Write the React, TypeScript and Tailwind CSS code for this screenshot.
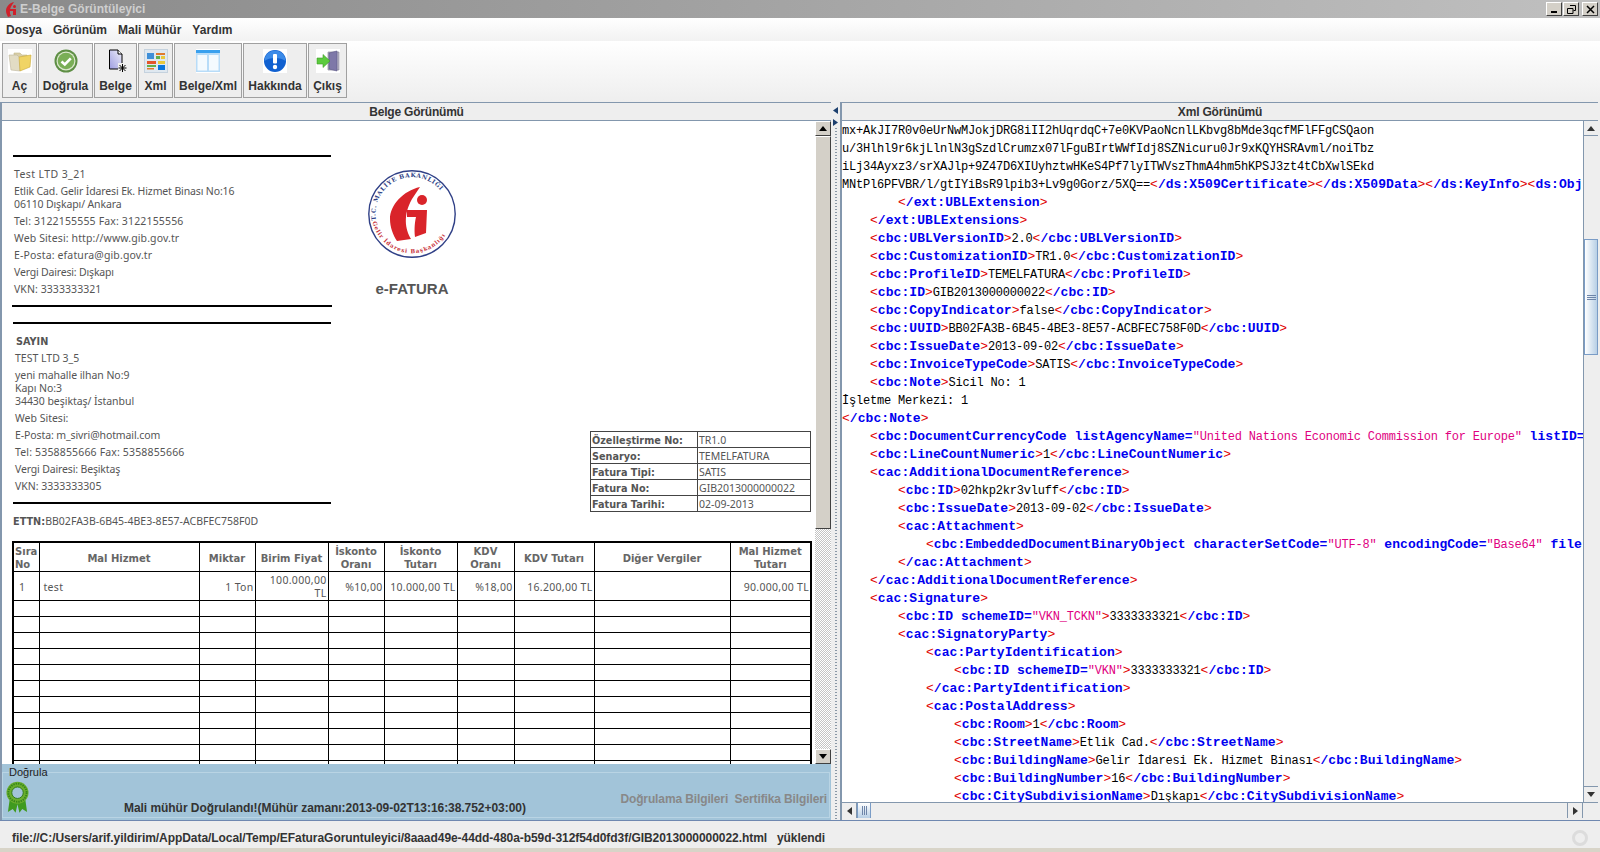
import type { ReactNode } from "react";

const XML_LINES: [number, string][] = [
  [0, "mx+AkJI7R0v0eUrNwMJokjDRG8iII2hUqrdqC+7e0KVPaoNcnlLKbvg8bMde3qcfMFlFFgCSQaon"],
  [0, "u/3Hlhl9r6kjLlnlN3gSzdlCrumzx07lFguBIrtWWfIdj8SZNicuru0Jr9xKQYHSRAvml/noiTbz"],
  [0, "iLj34Ayxz3/srXAJlp+9Z47D6XIUyhztwHKeS4Pf7lyITWVszThmA4hm5hKPSJ3zt4tCbXwlSEkd"],
  [0, "MNtPl6PFVBR/l/gtIYiBsR9lpib3+Lv9g0Gorz/5XQ==</ds:X509Certificate></ds:X509Data></ds:KeyInfo><ds:Obj"],
  [2, "</ext:UBLExtension>"],
  [1, "</ext:UBLExtensions>"],
  [1, "<cbc:UBLVersionID>2.0</cbc:UBLVersionID>"],
  [1, "<cbc:CustomizationID>TR1.0</cbc:CustomizationID>"],
  [1, "<cbc:ProfileID>TEMELFATURA</cbc:ProfileID>"],
  [1, "<cbc:ID>GIB2013000000022</cbc:ID>"],
  [1, "<cbc:CopyIndicator>false</cbc:CopyIndicator>"],
  [1, "<cbc:UUID>BB02FA3B-6B45-4BE3-8E57-ACBFEC758F0D</cbc:UUID>"],
  [1, "<cbc:IssueDate>2013-09-02</cbc:IssueDate>"],
  [1, "<cbc:InvoiceTypeCode>SATIS</cbc:InvoiceTypeCode>"],
  [1, "<cbc:Note>Sicil No: 1"],
  [0, "İşletme Merkezi: 1"],
  [0, "</cbc:Note>"],
  [1, '<cbc:DocumentCurrencyCode listAgencyName="United Nations Economic Commission for Europe" listID='],
  [1, "<cbc:LineCountNumeric>1</cbc:LineCountNumeric>"],
  [1, "<cac:AdditionalDocumentReference>"],
  [2, "<cbc:ID>02hkp2kr3vluff</cbc:ID>"],
  [2, "<cbc:IssueDate>2013-09-02</cbc:IssueDate>"],
  [2, "<cac:Attachment>"],
  [3, '<cbc:EmbeddedDocumentBinaryObject characterSetCode="UTF-8" encodingCode="Base64" file'],
  [2, "</cac:Attachment>"],
  [1, "</cac:AdditionalDocumentReference>"],
  [1, "<cac:Signature>"],
  [2, '<cbc:ID schemeID="VKN_TCKN">3333333321</cbc:ID>'],
  [2, "<cac:SignatoryParty>"],
  [3, "<cac:PartyIdentification>"],
  [4, '<cbc:ID schemeID="VKN">3333333321</cbc:ID>'],
  [3, "</cac:PartyIdentification>"],
  [3, "<cac:PostalAddress>"],
  [4, "<cbc:Room>1</cbc:Room>"],
  [4, "<cbc:StreetName>Etlik Cad.</cbc:StreetName>"],
  [4, "<cbc:BuildingName>Gelir İdaresi Ek. Hizmet Binası</cbc:BuildingName>"],
  [4, "<cbc:BuildingNumber>16</cbc:BuildingNumber>"],
  [4, "<cbc:CitySubdivisionName>Dışkapı</cbc:CitySubdivisionName>"],
];

const INDENT = ["pl-0", "pl-[28px]", "pl-[56px]", "pl-[84px]", "pl-[112px]"];
const PLAIN = "text-[12px] tracking-[-0.2px]";

function XmlTag({ tag }: { tag: string }) {
  const closed = tag.endsWith(">");
  const inner = tag.slice(1, closed ? -1 : undefined);
  return (
    <>
      <span className="text-[#e00000]">&lt;</span>
      {inner.split(/("[^"]*")/).map((part, i) =>
        part.startsWith('"') ? (
          <span key={i} className={`${PLAIN} text-[#e0007f]`}>{part}</span>
        ) : (
          <span key={i} className="font-bold tracking-[0.07px] text-[#0000f0]">{part}</span>
        ),
      )}
      {closed && <span className="text-[#e00000]">&gt;</span>}
    </>
  );
}

function XmlLine({ text }: { text: string }) {
  return (
    <>
      {text.split(/(<[^>]*>?)/).map((part, i) =>
        part.startsWith("<") ? <XmlTag key={i} tag={part} /> : <span key={i} className={PLAIN}>{part}</span>,
      )}
    </>
  );
}

function LogoMark() {
  return (
    <svg viewBox="0 0 90 90" className="h-[90px] w-[90px]">
      <circle cx="45" cy="45" r="43.2" fill="#fff" stroke="#2f3f86" strokeWidth="1.4" />
      <path d="M53 18C36 22 23 36 23 50C23 58 26 66 30 72L44 70C38 60 36 46 45 30Z" fill="#d9242a" />
      <circle cx="55" cy="31" r="5" fill="#d9242a" />
      <path d="M40 41H60L59 64L48 68C47 60 48 52 49 48H40Z" fill="#d9242a" />
      <defs>
        <path id="logoTop" d="M10 55A36.5 36.5 0 1 1 80 55" />
        <path id="logoBottom" d="M5 50A40.5 40.5 0 0 0 85 50" />
      </defs>
      <text className="font-['DejaVu_Serif',serif] text-[6px] font-bold tracking-[0.6px]" fill="#2f3f86">
        <textPath href="#logoTop" startOffset="4">T.C. MALİYE BAKANLIĞI</textPath>
      </text>
      <text className="font-['DejaVu_Serif',serif] text-[5.6px] font-bold tracking-[0.8px]" fill="#c8323a">
        <textPath href="#logoBottom" startOffset="3">Gelir İdaresi Başkanlığı</textPath>
      </text>
    </svg>
  );
}

function TitleIcon() {
  return (
    <svg viewBox="0 0 12 15" className="ml-[5px] h-[15px] w-[12px]">
      <path d="M9 0C4 1 1 5 1 9C1 11 2 13 3 15L6 14C4 10 5 6 7 3Z" fill="#d0202a" />
      <circle cx="9.5" cy="4.5" r="1.5" fill="#d0202a" />
      <path d="M5 7H11V13H8V9H5Z" fill="#d0202a" />
    </svg>
  );
}

function WindowButton({ children }: { children: ReactNode }) {
  return (
    <div className="flex h-[14px] w-[16px] items-center justify-center border border-t-white border-l-white border-r-[#404040] border-b-[#404040] bg-[#d4d0c8]">
      {children}
    </div>
  );
}

function FolderIcon() {
  return (
    <svg viewBox="0 0 24 24" className="h-6 w-6 bg-white">
      <path d="M6 4H12L14 6H19V18H6Z" fill="#d9cfa8" stroke="#c4b98c" strokeWidth=".6" />
      <path d="M1 6H9L12 9V22L3 21Z" fill="#e2dcc4" stroke="#bdb69c" strokeWidth=".6" />
      <path d="M11 8L23 6L22 18L12 22Z" fill="#f0d465" stroke="#c9a93a" strokeWidth=".6" />
    </svg>
  );
}

function CheckIcon() {
  return (
    <svg viewBox="0 0 24 24" className="h-6 w-6">
      <circle cx="12" cy="12" r="11.5" fill="#5e8f45" />
      <circle cx="12" cy="12" r="9.5" fill="#dbe8cd" />
      <circle cx="12" cy="12" r="8.3" fill="#79ae56" />
      <path d="M7.5 12.5L10.8 15.5L16.8 9.3" fill="none" stroke="#fff" strokeWidth="2.6" />
    </svg>
  );
}

function DocumentIcon() {
  return (
    <svg viewBox="0 0 24 24" className="h-6 w-6">
      <defs>
        <linearGradient id="docFill" x1="0" y1="1" x2="1" y2="0">
          <stop offset="0" stopColor="#9d9de0" />
          <stop offset="1" stopColor="#f0f0fa" />
        </linearGradient>
      </defs>
      <path d="M5.5 1H14L18 5V20H5.5Z" fill="url(#docFill)" stroke="#000" />
      <path d="M14 1V5H18" fill="#fff" stroke="#000" />
      <rect x="14" y="14" width="9" height="9" fill="#eeeeee" />
      <path d="M18.5 15V23M14.5 19H22.5M15.5 16L21.5 22M21.5 16L15.5 22" stroke="#000" strokeWidth="1" />
    </svg>
  );
}

function XmlIcon() {
  return (
    <svg viewBox="0 0 24 24" className="h-6 w-6">
      <rect x=".5" y=".5" width="23" height="23" fill="#dfe8f0" stroke="#c5d2de" />
      <rect x="3" y="4" width="7" height="6" fill="#3f8fd8" />
      <rect x="12" y="4" width="9" height="2" fill="#e07a2c" />
      <rect x="12" y="7" width="4" height="3" fill="#63b04a" />
      <rect x="17" y="7" width="4" height="3" fill="#e8c83c" />
      <rect x="3" y="12" width="9" height="3" fill="#e4552a" />
      <rect x="3" y="16" width="9" height="2" fill="#63b04a" />
      <rect x="3" y="19" width="7" height="1.5" fill="#e07a2c" />
      <rect x="14" y="12" width="7" height="3" fill="#e8c83c" />
      <rect x="14" y="16" width="7" height="5" fill="#0a76dc" />
    </svg>
  );
}

function SplitIcon() {
  return (
    <svg viewBox="0 0 24 24" className="h-6 w-6 bg-white">
      <rect x="0" y="1" width="24" height="22" fill="#b8dcf8" />
      <rect x="0" y="1" width="24" height="3" fill="#39a0ee" />
      <rect x="1.5" y="6" width="9.5" height="15.5" fill="#f4fafe" />
      <rect x="13" y="6" width="9.5" height="15.5" fill="#f4fafe" />
    </svg>
  );
}

function InfoIcon() {
  return (
    <svg viewBox="0 0 24 24" className="h-6 w-6 bg-white">
      <circle cx="12" cy="12" r="11" fill="#1060d0" />
      <path d="M1.5 12A10.5 10.5 0 0 1 22.5 12C18 8 6 8 1.5 12Z" fill="#3b8ae8" />
      <rect x="10" y="5" width="4" height="9.5" rx="1" fill="#fff" />
      <circle cx="12" cy="18" r="2.2" fill="#fff" />
    </svg>
  );
}

function ExitIcon() {
  return (
    <svg viewBox="0 0 24 24" className="h-6 w-6 bg-white">
      <path d="M12 3H23V21H12Z" fill="#b9b7c8" stroke="#7c7a8e" strokeWidth=".6" />
      <path d="M13 4L21 2V22L13 20Z" fill="#7e78a8" stroke="#5d5788" strokeWidth=".6" />
      <path d="M1 9H7V5.5L14 12L7 18.5V15H1Z" fill="#5ccb3e" stroke="#3f9a2a" strokeWidth=".6" />
    </svg>
  );
}

function Rosette() {
  return (
    <svg viewBox="0 0 24 34" className="h-[33px] w-[23px] shrink-0">
      <path d="M4 18L2 32L7 29L10 33L12 24L14 33L17 29L22 32L20 18Z" fill="#3f9a1f" />
      <circle cx="12" cy="12" r="11.5" fill="#6aae2e" />
      <circle cx="12" cy="12" r="9.5" fill="none" stroke="#35861a" strokeWidth="2" strokeDasharray="1.5 1" />
      <circle cx="12" cy="12" r="6" fill="#a3c4d9" stroke="#2e7a18" />
    </svg>
  );
}

const TOOLBAR = [
  { label: "Aç", width: "w-[35px]", icon: <FolderIcon /> },
  { label: "Doğrula", width: "w-[55px]", icon: <CheckIcon /> },
  { label: "Belge", width: "w-[43px]", icon: <DocumentIcon /> },
  { label: "Xml", width: "w-[35px]", icon: <XmlIcon /> },
  { label: "Belge/Xml", width: "w-[68px]", icon: <SplitIcon /> },
  { label: "Hakkında", width: "w-[64px]", icon: <InfoIcon /> },
  { label: "Çıkış", width: "w-[39px]", icon: <ExitIcon /> },
];

const PARTY_TEXT = "mt-[4px] leading-[13px]";
const BOLD_TEXT = "font-['DejaVu_Sans',sans-serif] font-bold";

function SellerBlock() {
  return (
    <div className="pl-[2px] pt-[7px]">
      <p className={`${PARTY_TEXT} tracking-[0.4px]`}>Test LTD 3_21</p>
      <p className={`${PARTY_TEXT} tracking-[-0.13px]`}>
        Etlik Cad. Gelir İdaresi Ek. Hizmet Binası No:16
        <br />
        06110 Dışkapı/ Ankara
      </p>
      <p className={`${PARTY_TEXT} tracking-[0.16px]`}>Tel: 3122155555 Fax: 3122155556</p>
      <p className={`${PARTY_TEXT} tracking-[0.12px]`}>Web Sitesi: http://www.gib.gov.tr</p>
      <p className={`${PARTY_TEXT} tracking-[0.15px]`}>E-Posta: efatura@gib.gov.tr</p>
      <p className={`${PARTY_TEXT} tracking-[-0.18px]`}>Vergi Dairesi: Dışkapı</p>
      <p className={`${PARTY_TEXT} tracking-[0.07px]`}>VKN: 3333333321</p>
    </div>
  );
}

function BuyerBlock() {
  return (
    <div className="pl-[3px] pt-[7px]">
      <p className={`${PARTY_TEXT} ${BOLD_TEXT} pl-px text-[9.7px]`}>SAYIN</p>
      <p className={PARTY_TEXT}>TEST LTD 3_5</p>
      <p className={`${PARTY_TEXT} tracking-[-0.05px]`}>
        yeni mahalle ilhan No:9
        <br />
        Kapı No:3
        <br />
        34430 beşiktaş/ İstanbul
      </p>
      <p className={PARTY_TEXT}>Web Sitesi:</p>
      <p className={`${PARTY_TEXT} tracking-[-0.1px]`}>E-Posta: m_sivri@hotmail.com</p>
      <p className={`${PARTY_TEXT} tracking-[0.16px]`}>Tel: 5358855666 Fax: 5358855666</p>
      <p className={`${PARTY_TEXT} tracking-[-0.15px]`}>Vergi Dairesi: Beşiktaş</p>
      <p className={PARTY_TEXT}>VKN: 3333333305</p>
    </div>
  );
}

const INFO_ROWS = [
  ["Özelleştirme No:", "TR1.0"],
  ["Senaryo:", "TEMELFATURA"],
  ["Fatura Tipi:", "SATIS"],
  ["Fatura No:", "GIB2013000000022"],
  ["Fatura Tarihi:", "02-09-2013"],
];

function InfoTable() {
  return (
    <table className="mb-[16px] w-[221px] table-fixed self-end border-collapse">
      <colgroup>
        <col className="w-[107px]" />
        <col />
      </colgroup>
      <tbody>
        {INFO_ROWS.map(([label, value]) => (
          <tr key={label} className="h-[16px]">
            <td className={`${BOLD_TEXT} whitespace-nowrap border border-[#444] px-[1px] pb-0 pt-[1px] text-[9.7px] leading-[13px]`}>{label}</td>
            <td className="border border-[#444] px-[1px] py-0 leading-[14px]">{value}</td>
          </tr>
        ))}
      </tbody>
    </table>
  );
}

const HEAD_CELL = `${BOLD_TEXT} whitespace-pre-line border border-black px-[1px] pb-0 pt-[2px] align-middle text-[10px] leading-[13px] text-[#666]`;
const BODY_CELL = "whitespace-pre-line border border-black px-[1px] pb-0 pt-[2px] align-middle leading-[13px] tracking-[0.3px]";

const HEADERS = [
  "Sıra\nNo",
  "Mal Hizmet",
  "Miktar",
  "Birim Fiyat",
  "İskonto\nOranı",
  "İskonto\nTutarı",
  "KDV\nOranı",
  "KDV Tutarı",
  "Diğer Vergiler",
  "Mal Hizmet\nTutarı",
];

function ItemTable() {
  return (
    <table className="mt-[13px] w-[798px] table-fixed border-collapse border-2 border-black">
      <colgroup>
        <col className="w-[26px]" />
        <col className="w-[160px]" />
        <col className="w-[56px]" />
        <col className="w-[73px]" />
        <col className="w-[56px]" />
        <col className="w-[73px]" />
        <col className="w-[57px]" />
        <col className="w-[80px]" />
        <col className="w-[136px]" />
        <col className="w-[81px]" />
      </colgroup>
      <thead>
        <tr className="h-[29px]">
          {HEADERS.map((h, i) => (
            <th key={h} className={`${HEAD_CELL} ${i === 0 ? "text-left" : "text-center"}`}>
              {h}
            </th>
          ))}
        </tr>
      </thead>
      <tbody>
        <tr className="h-[29px]">
          <td className={`${BODY_CELL} pl-[5px] text-left`}>1</td>
          <td className={`${BODY_CELL} pl-[4px] text-left`}>test</td>
          <td className={`${BODY_CELL} text-right`}>1 Ton</td>
          <td className={`${BODY_CELL} text-right`}>{"100.000,00\nTL"}</td>
          <td className={`${BODY_CELL} text-right`}>%10,00</td>
          <td className={`${BODY_CELL} text-right`}>10.000,00 TL</td>
          <td className={`${BODY_CELL} text-right`}>%18,00</td>
          <td className={`${BODY_CELL} text-right`}>16.200,00 TL</td>
          <td className={BODY_CELL}></td>
          <td className={`${BODY_CELL} text-right`}>90.000,00 TL</td>
        </tr>
        {Array.from({ length: 11 }).map((_, row) => (
          <tr key={row} className="h-[16px]">
            {HEADERS.map((h) => (
              <td key={h} className="border border-black p-0" />
            ))}
          </tr>
        ))}
      </tbody>
    </table>
  );
}

function DocumentView() {
  return (
    <div className="min-w-0 flex-1 overflow-hidden bg-white pl-[10px] pt-[34px] font-['Noto_Sans',sans-serif] text-[10.5px] text-[#555]">
      <div className="flex w-[799px]">
        <div className="w-[320px]">
          <div className="mx-[1px] h-[2px] bg-black" />
          <SellerBlock />
          <div className="mt-[9px] h-[2px] bg-black" />
          <div className="mx-[1px] mt-[15px] h-[2px] bg-black" />
          <BuyerBlock />
          <div className="mx-[1px] mt-[9px] h-[2px] bg-black" />
          <p className="mt-[11px] pl-[1px] leading-[13px] tracking-[0.02px]">
            <b className={`${BOLD_TEXT} text-[9.7px]`}>ETTN:</b>BB02FA3B-6B45-4BE3-8E57-ACBFEC758F0D
          </p>
        </div>
        <div className="ml-[35px] mt-[14px] flex w-[90px] flex-col items-center">
          <LogoMark />
          <p className="mt-[22px] whitespace-nowrap font-['Liberation_Sans',sans-serif] text-[15px] font-bold leading-[16px]">e-FATURA</p>
        </div>
        <div className="ml-auto flex">
          <InfoTable />
        </div>
      </div>
      <ItemTable />
    </div>
  );
}

function LeftScrollbar() {
  return (
    <div className="flex h-full w-[16px] shrink-0 flex-col">
      <div className="flex h-[15px] shrink-0 items-center justify-center border border-t-white border-l-white border-r-[#404040] border-b-[#404040] bg-[#d4d0c8]">
        <svg viewBox="0 0 8 5" className="h-[5px] w-[8px]"><path d="M4 0L8 5H0Z" fill="#000" /></svg>
      </div>
      <div className="h-[393px] shrink-0 border border-t-white border-l-white border-r-[#404040] border-b-[#404040] bg-[#d4d0c8]" />
      <div className="flex-1 bg-[repeating-conic-gradient(#c4c4c4_0_25%,#ffffff_0_50%)] bg-[length:2px_2px]" />
      <div className="flex h-[15px] shrink-0 items-center justify-center border border-t-white border-l-white border-r-[#404040] border-b-[#404040] bg-[#d4d0c8]">
        <svg viewBox="0 0 8 5" className="h-[5px] w-[8px]"><path d="M0 0H8L4 5Z" fill="#000" /></svg>
      </div>
    </div>
  );
}

function PanelHeader({ title }: { title: string }) {
  return (
    <div className="flex h-[19px] shrink-0 items-center justify-center border-y border-[#8397ad] bg-[#eeeeee] text-[12px] font-bold tracking-[-0.2px] text-[#333]">
      {title}
    </div>
  );
}

function Splitter() {
  return (
    <div className="flex w-[9px] shrink-0 flex-col items-center bg-[#eeeeee] pt-[5px]">
      <svg viewBox="0 0 5 7" className="h-[7px] w-[5px]"><path d="M5 0V7L0 3.5Z" fill="#1c3f6e" /></svg>
      <svg viewBox="0 0 5 7" className="mt-[5px] h-[7px] w-[5px]"><path d="M0 0V7L5 3.5Z" fill="#1c3f6e" /></svg>
      <div className="mt-[2px] w-[2px] flex-1 bg-[repeating-linear-gradient(to_bottom,#8a98a6_0,#8a98a6_1px,transparent_1px,transparent_3px)]" />
    </div>
  );
}

function XmlScrollbar() {
  return (
    <div className="flex w-[15px] shrink-0 flex-col border-l border-[#8397ad] bg-[#eeeeee]">
      <div className="flex h-[15px] shrink-0 items-center justify-center border-b border-[#8397ad]">
        <svg viewBox="0 0 8 5" className="h-[5px] w-[8px]"><path d="M4 0L8 5H0Z" fill="#333" /></svg>
      </div>
      <div className="h-[103px] shrink-0" />
      <div className="flex h-[116px] shrink-0 flex-col items-center justify-center gap-[1px] border border-[#7a9cc6] bg-gradient-to-r from-white to-[#b8cfe5]">
        <div className="h-px w-[9px] bg-[#6d84a8]" />
        <div className="h-px w-[9px] bg-[#6d84a8]" />
        <div className="h-px w-[9px] bg-[#6d84a8]" />
      </div>
      <div className="flex-1" />
      <div className="flex h-[16px] shrink-0 items-center justify-center border-t border-[#8397ad]">
        <svg viewBox="0 0 8 5" className="h-[5px] w-[8px]"><path d="M0 0H8L4 5Z" fill="#333" /></svg>
      </div>
    </div>
  );
}

function XmlHorizontalBar() {
  return (
    <div className="flex h-[15px] shrink-0 bg-[#eeeeee]">
      <div className="flex w-[15px] items-center justify-center border-r border-[#8397ad]">
        <svg viewBox="0 0 5 8" className="h-[8px] w-[5px]"><path d="M5 0V8L0 4Z" fill="#333" /></svg>
      </div>
      <div className="flex w-[14px] items-center justify-center gap-[1px] border-x border-[#7a9cc6] bg-gradient-to-b from-white to-[#b8cfe5]">
        <div className="h-[9px] w-px bg-[#6d84a8]" />
        <div className="h-[9px] w-px bg-[#6d84a8]" />
        <div className="h-[9px] w-px bg-[#6d84a8]" />
      </div>
      <div className="flex-1" />
      <div className="flex w-[16px] items-center justify-center border-x border-[#8397ad]">
        <svg viewBox="0 0 5 8" className="h-[8px] w-[5px]"><path d="M0 0V8L5 4Z" fill="#333" /></svg>
      </div>
      <div className="w-[15px]" />
    </div>
  );
}

export default function App() {
  return (
    <div className="flex h-[852px] w-[1600px] flex-col overflow-hidden bg-[#eeeeee] font-['Liberation_Sans',Arial,sans-serif] text-[12px]">
      <div className="flex h-[18px] shrink-0 items-center bg-gradient-to-r from-[#8a8a8a] to-[#c0c0c0]">
        <TitleIcon />
        <span className="ml-[3px] font-bold text-[#cfcfcf]">E-Belge Görüntüleyici</span>
        <div className="ml-auto mr-[2px] flex gap-[1px]">
          <WindowButton>
            <div className="mt-[6px] h-[2px] w-[6px] bg-black" />
          </WindowButton>
          <WindowButton>
            <svg viewBox="0 0 9 9" className="h-[9px] w-[9px]">
              <path d="M3 .5H8.5V5.5H6.5M.5 3.5H6V8.5H.5Z" fill="none" stroke="#000" />
            </svg>
          </WindowButton>
          <div className="ml-[2px]">
            <WindowButton>
              <svg viewBox="0 0 9 9" className="h-[9px] w-[9px]">
                <path d="M1 1L8 8M8 1L1 8" stroke="#000" strokeWidth="1.5" />
              </svg>
            </WindowButton>
          </div>
        </div>
      </div>

      <div className="flex h-[23px] shrink-0 items-center gap-[11px] bg-gradient-to-b from-white to-[#f2f2f2] pl-[6px] font-bold text-[#333]">
        <span>Dosya</span>
        <span>Görünüm</span>
        <span>Mali Mühür</span>
        <span>Yardım</span>
      </div>

      <div className="flex h-[61px] shrink-0 gap-[1px] bg-gradient-to-b from-white to-[#eeeeee] pl-[2px] pt-[2px]">
        {TOOLBAR.map((b) => (
          <div
            key={b.label}
            className={`${b.width} flex h-[55px] flex-col items-center border border-[#a0a0a0] bg-[#eeeeee] pt-[5px] font-bold text-[#333]`}
          >
            {b.icon}
            <span className="mt-[5px] whitespace-nowrap leading-[16px]">{b.label}</span>
          </div>
        ))}
      </div>

      <div className="flex h-[719px] shrink-0 border-b border-[#6f88b0]">
        <div className="flex w-[831px] shrink-0 flex-col border-l-2 border-[#8397ad]">
          <PanelHeader title="Belge Görünümü" />
          <div className="flex h-[643px] shrink-0">
            <DocumentView />
            <LeftScrollbar />
          </div>
          <div className="flex-1 bg-[#a2c4d9] pr-[1px] pt-[2px]">
            <fieldset className="h-[52px] border border-[#b9d4e4] pl-[3px]">
              <legend className="ml-[3px] text-[11px] leading-[13px] text-[#222]">Doğrula</legend>
              <div className="flex h-[38px] items-end pb-[3px]">
                <Rosette />
                <span className="mb-[-1px] ml-[95px] font-bold leading-[14px] tracking-[-0.05px] text-[#333]">
                  Mali mühür Doğrulandı!(Mühür zamanı:2013-09-02T13:16:38.752+03:00)
                </span>
                <span className="mb-[8px] ml-auto mr-[2px] whitespace-pre font-bold leading-[14px] tracking-[-0.12px] text-[#888]">
                  Doğrulama Bilgileri{"  "}Sertifika Bilgileri
                </span>
              </div>
            </fieldset>
          </div>
        </div>

        <Splitter />

        <div className="flex min-w-0 flex-1 flex-col border-l-2 border-[#8397ad] pb-[2px] pr-[2px]">
          <PanelHeader title="Xml Görünümü" />
          <div className="flex min-h-0 flex-1">
            <div className="min-w-0 flex-1 overflow-hidden bg-white pt-px font-['Liberation_Mono',monospace] text-[13px] leading-[18px] text-black">
              {XML_LINES.map(([level, text], i) => (
                <div key={i} className={`${INDENT[level]} whitespace-pre`}>
                  <XmlLine text={text} />
                </div>
              ))}
            </div>
            <XmlScrollbar />
          </div>
          <div className="border-t border-[#8397ad]">
            <XmlHorizontalBar />
          </div>
        </div>
      </div>

      <div className="flex h-[27px] shrink-0 items-center justify-between pl-[12px] pr-[12px] pt-[6px] font-bold tracking-[-0.055px] text-[#333]">
        <span className="whitespace-pre">
          file://C:/Users/arif.yildirim/AppData/Local/Temp/EFaturaGoruntuleyici/8aaad49e-44dd-480a-b59d-312f54d0fd3f/GIB2013000000022.html{"   "}yüklendi
        </span>
        <div className="h-[16px] w-[16px] rounded-full border-[3px] border-[#dcdcdc]" />
      </div>
      <div className="h-[4px] shrink-0 bg-[#d8d4c8]" />
    </div>
  );
}
